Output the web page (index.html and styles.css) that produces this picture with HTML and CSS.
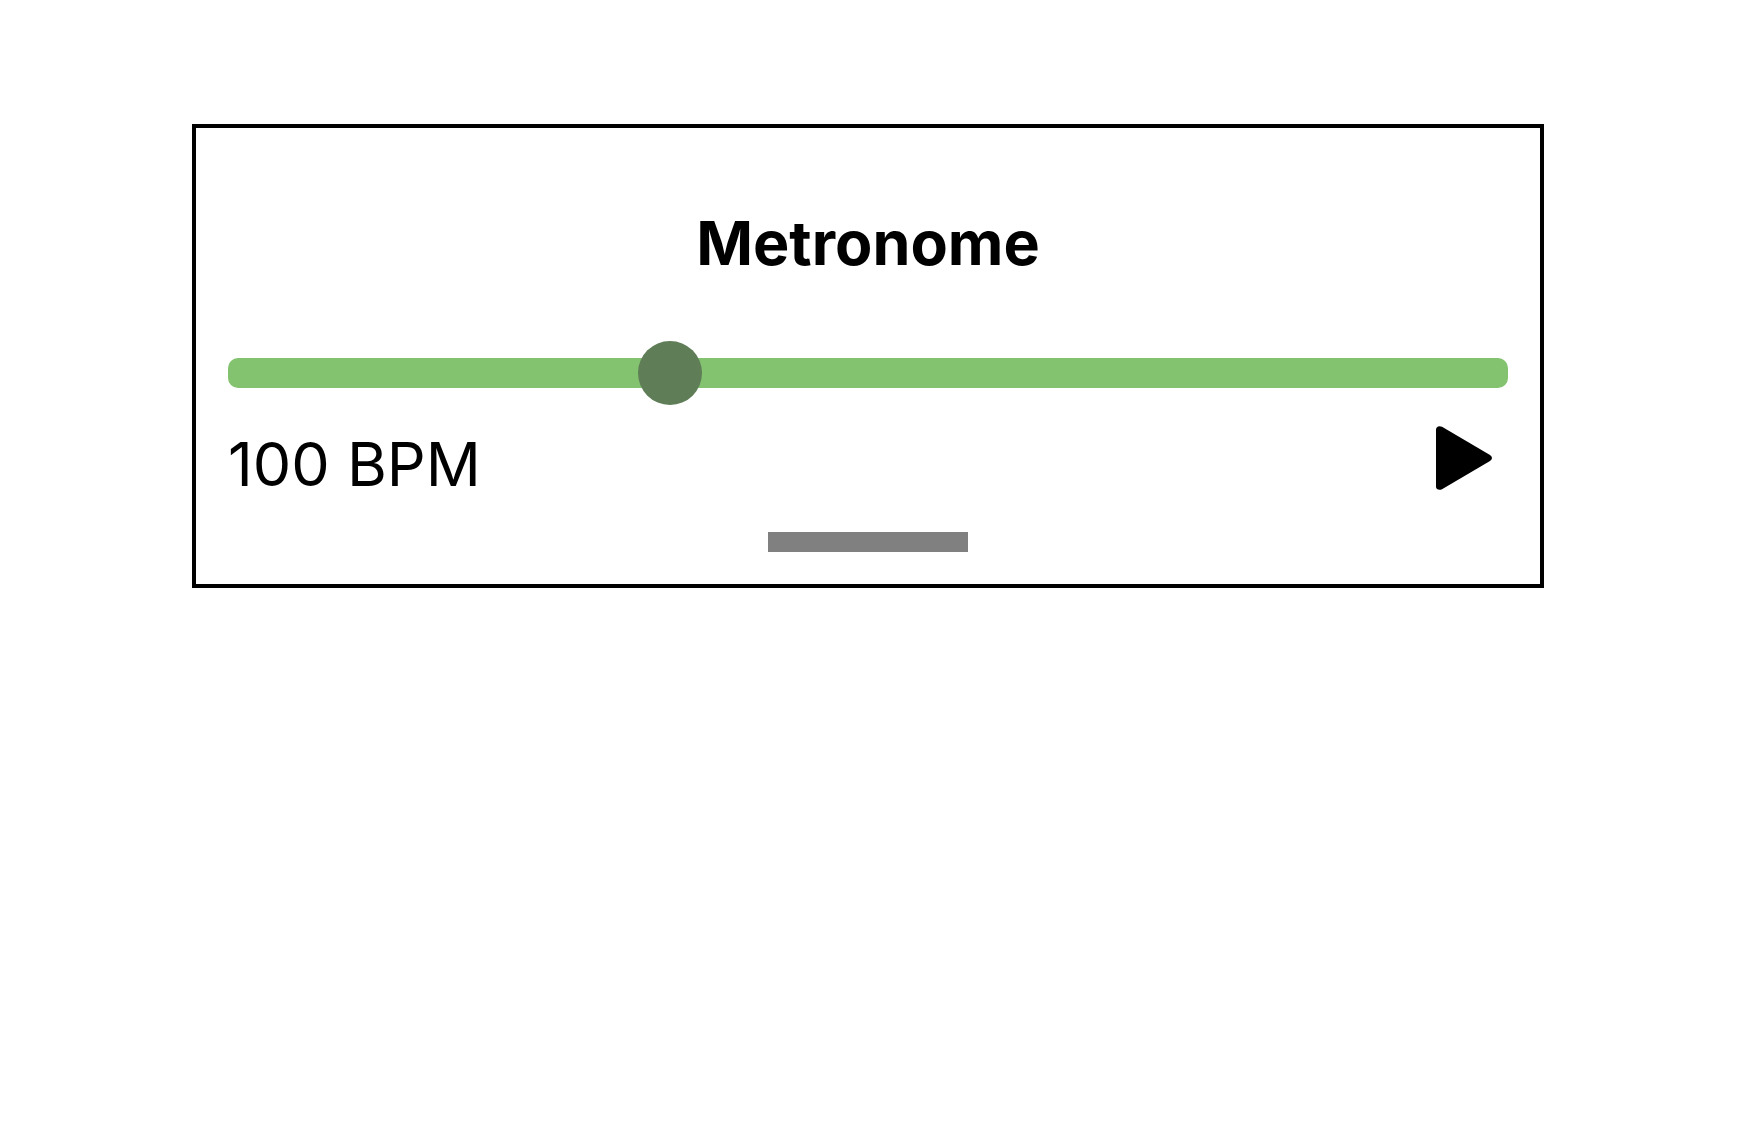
FILE: index.html
```html
<!DOCTYPE html>
<html lang="en">
<head>
<meta charset="utf-8">
<meta name="viewport" content="width=device-width, initial-scale=1">
<title>Metronome</title>
<link rel="stylesheet" href="styles.css">
</head>
<body>
<main class="metronome">
  <h1 class="title">Metronome</h1>
  <input class="slider" type="range" id="bpm" min="40" max="218" value="100" aria-label="Beats per minute">
  <div class="controls">
    <label class="tempo" for="bpm">100 BPM</label>
    <button class="play" type="button" aria-label="Play">
      <svg class="play-icon" viewBox="0 0 56 64" aria-hidden="true"><path d="M0 3.500C0 .6 3 -.7 6 .8L54 29Q56 30.300 56 32Q56 33.700 54 35L6 63.200C3 64.700 0 63.400 0 60.500Z"/></svg>
    </button>
  </div>
  <div class="beat"></div>
</main>
</body>
</html>
```
FILE: styles.css
```css
* {
  box-sizing: border-box;
}

body {
  margin: 0;
  padding: 124px 196px 0 192px;
  background: #fff;
  color: #000;
  font-family: Inter, "Liberation Sans", sans-serif;
  font-size: 61px;
  line-height: 76px;
}

.metronome {
  display: flex;
  flex-direction: column;
  padding: 32px;
  border: 4px solid #000;
}

.title {
  margin: 45px 0 60px;
  font-size: 61px;
  font-weight: 700;
  text-align: center;
}

.slider {
  appearance: none;
  width: 100%;
  height: 64px;
  margin: 0;
  background: transparent;
}

.slider::-webkit-slider-runnable-track {
  height: 30px;
  border-radius: 10px;
  background: #83c36f;
}

.slider::-webkit-slider-thumb {
  appearance: none;
  width: 64px;
  height: 64px;
  margin-top: -17px;
  border-radius: 50%;
  background: #5f7d57;
}

.controls {
  display: flex;
  justify-content: space-between;
  align-items: flex-start;
  padding: 21px 0 30px;
}

.play {
  display: flex;
  margin: 0;
  padding: 0 16px 0 0;
  border: 0;
  background: none;
}

.play-icon {
  width: 56px;
  height: 64px;
}

.beat {
  align-self: center;
  width: 200px;
  height: 20px;
  background: #808080;
}
```
